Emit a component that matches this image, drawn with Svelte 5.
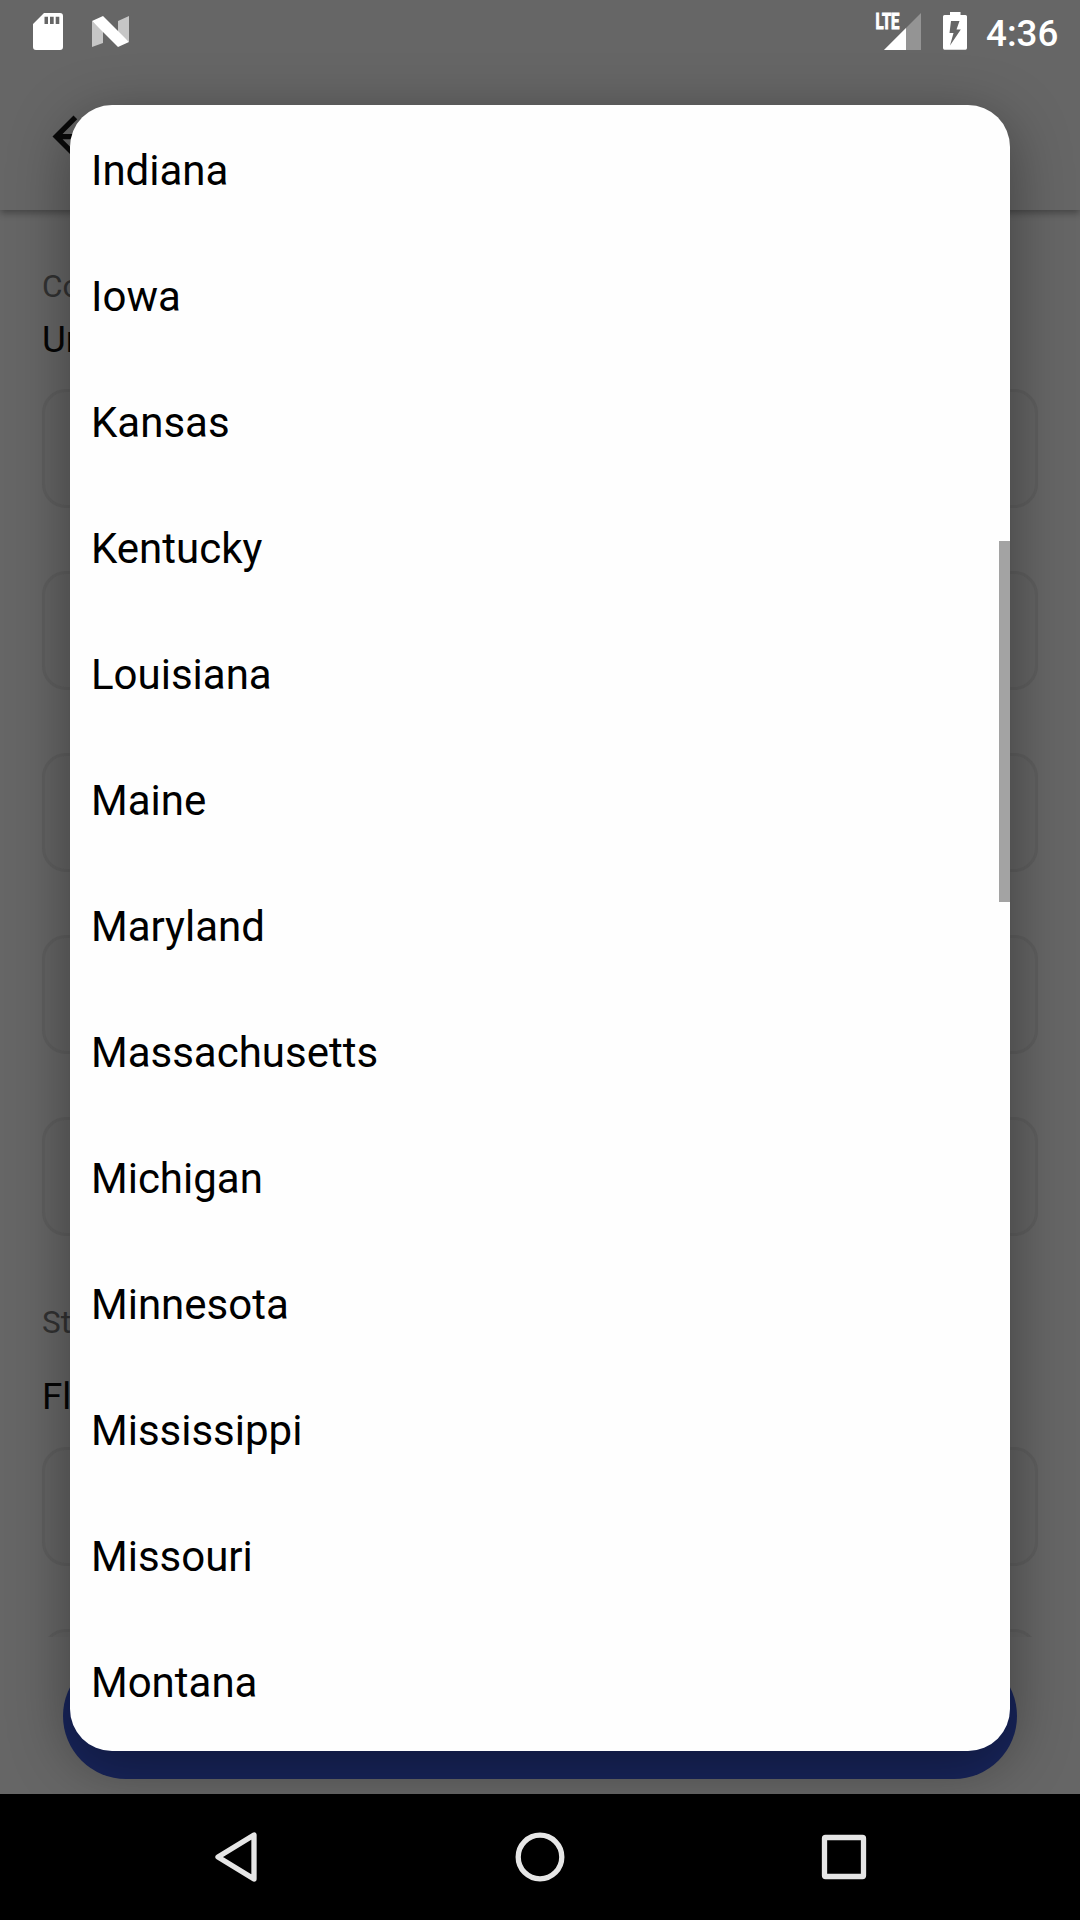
<script>
  const states = [
    'Indiana', 'Iowa', 'Kansas', 'Kentucky', 'Louisiana', 'Maine', 'Maryland',
    'Massachusetts', 'Michigan', 'Minnesota', 'Mississippi', 'Missouri', 'Montana'
  ];
  const addressFields = ['name', 'street', 'unit', 'city', 'zip'];
</script>

<div class="screen">
  <header class="top">
    <div class="status">
      <svg class="sd" width="30" height="37" viewBox="0 0 30 37">
        <path fill="#fff" fill-rule="evenodd" d="M11 0H27Q30 0 30 3V34Q30 37 27 37H3Q0 37 0 34V11ZM11.5 3.7V11H15V3.7ZM17 3.7V11H20.700V3.700ZM22.700 3.700V11H26.300V3.700Z" />
      </svg>
      <svg class="nougat" width="38" height="32" viewBox="0 0 38 32">
        <path fill="#c6c6c6" d="M0 5L11 15V27L0 31ZM26 5L37 0V26L26 17Z" />
        <path fill="#fff" d="M0 5L11 0L37 26L26 31Z" />
      </svg>
      <span class="grow"></span>
      <svg class="signal" width="46" height="38" viewBox="0 0 46 38">
        <path fill="#949494" d="M46 1V38H9Z" />
        <path fill="#fff" d="M31 16V38H9Z" />
        <text x="0.500" y="17" textLength="24" lengthAdjust="spacingAndGlyphs">LTE</text>
      </svg>
      <svg class="battery" width="24" height="38" viewBox="0 0 24 38">
        <path fill="#fff" fill-rule="evenodd" d="M7 0H17.500V3H22.500Q24 3 24 4.500V36Q24 37.700 22.500 37.700H1.500Q0 37.700 0 36V4.500Q0 3 1.500 3H7ZM8 9L6.500 21H10.500L7 33.500L17.800 17.500H13.500L16.500 9Z" />
      </svg>
      <span class="time">4:36</span>
    </div>
    <div class="appbar">
      <svg width="63" height="63" viewBox="0 0 24 24">
        <path fill="#090909" d="M20 11H7.830l5.590-5.590L12 4l-8 8 8 8 1.410-1.410L7.830 13H20v-2z" />
      </svg>
    </div>
  </header>

  <main class="form">
    <div class="label country">Country</div>
    <div class="value">United States</div>
    <div class="fields">
      {#each addressFields as field (field)}
        <div class="field"></div>
      {/each}
    </div>
    <div class="label state">State</div>
    <div class="value chosen">Florida</div>
    <div class="fields">
      <div class="field"></div>
      <div class="field"></div>
    </div>
  </main>

  <footer class="action"><div class="submit"></div></footer>

  <nav class="nav">
    <svg width="126" height="126" viewBox="0 0 126 126">
      <path d="M61 41V85L25 63Z" />
    </svg>
    <svg class="home" width="126" height="126" viewBox="0 0 126 126">
      <circle cx="63" cy="63" r="21.800" />
    </svg>
    <svg width="126" height="126" viewBox="0 0 126 126">
      <rect x="43.500" y="43.500" width="39" height="39" rx="1" />
    </svg>
  </nav>

  <div class="shade">
    <div class="dialog">
      <ul>
        {#each states as state (state)}
          <li>{state}</li>
        {/each}
      </ul>
      <div class="thumb"></div>
    </div>
  </div>
</div>

<style>
  :global(body) { margin: 0; background: #000; }
  .screen {
    position: relative;
    display: flex;
    flex-direction: column;
    width: 1080px;
    height: 1920px;
    overflow: hidden;
    background: #666;
    color: #050505;
    font-family: Roboto, "Liberation Sans", sans-serif;
  }
  svg { display: block; flex: none; }
  .top {
    flex: none;
    height: 210px;
    background: #666;
    box-shadow: 0 3px 7px rgba(0, 0, 0, 0.32);
  }
  .status {
    box-sizing: border-box;
    display: flex;
    align-items: flex-start;
    height: 63px;
    padding: 0 22px 0 32.5px;
  }
  .sd { margin-top: 13px; }
  .nougat { margin: 16px 0 0 29.500px; }
  .grow { flex: 1; }
  .signal { margin: 12px 22px 0 0; overflow: visible; }
  .signal text {
    font: 700 22.5px Roboto, sans-serif;
    fill: #fff;
    stroke: #fff;
    stroke-width: 1.1;
  }
  .battery { margin: 12px 19px 0 0; }
  .time {
    width: 72px;
    color: #fff;
    font-size: 36.75px;
    font-weight: 500;
    line-height: 67px;
    white-space: nowrap;
  }
  .appbar { display: flex; align-items: center; height: 147px; padding-left: 42px; }
  .form {
    box-sizing: border-box;
    flex: none;
    height: 1427px;
    padding: 56px 42px 0;
    overflow: hidden;
  }
  .label { height: 42px; color: #323232; font-size: 31.5px; line-height: 42px; }
  .value { height: 50px; font-size: 36.75px; line-height: 50px; }
  .country { margin-bottom: 7px; }
  .fields { display: flex; flex-direction: column; gap: 63px; margin-top: 24px; }
  .field {
    box-sizing: border-box;
    flex: none;
    height: 119px;
    border: 3px solid #5f5f5f;
    border-radius: 24px;
    background: #646464;
  }
  .state { margin-top: 66px; }
  .chosen { margin-top: 28px; }
  .form > .chosen + .fields { margin-top: 25px; }
  .action { flex: 1; padding: 16px 63px 0; }
  .submit { height: 126px; border-radius: 63px; background: #18255c; }
  .nav {
    box-sizing: border-box;
    position: relative;
    z-index: 2;
    display: flex;
    flex: none;
    justify-content: space-between;
    height: 126px;
    padding: 0 173px 0 193px;
    background: #000;
  }
  .nav svg { fill: none; stroke: #e6e6e6; stroke-width: 5.3; stroke-linejoin: round; }
  .nav .home { margin: 0 20px 0 0; }
  .shade {
    position: absolute;
    inset: 105px 70px 169px;
    border-radius: 42px;
    box-shadow: 0 14px 60px rgba(0, 0, 0, 0.38);
  }
  .dialog {
    position: relative;
    height: 100%;
    overflow: hidden;
    border-radius: 42px;
    background: #fefefe;
  }
  ul { margin: 0; padding: 3px 21px 0; list-style: none; }
  li { height: 126px; color: #000; font-size: 42px; line-height: 126px; }
  .thumb {
    position: absolute;
    top: 436px;
    right: 0;
    width: 11px;
    height: 361px;
    background: #a3a3a3;
  }
</style>
